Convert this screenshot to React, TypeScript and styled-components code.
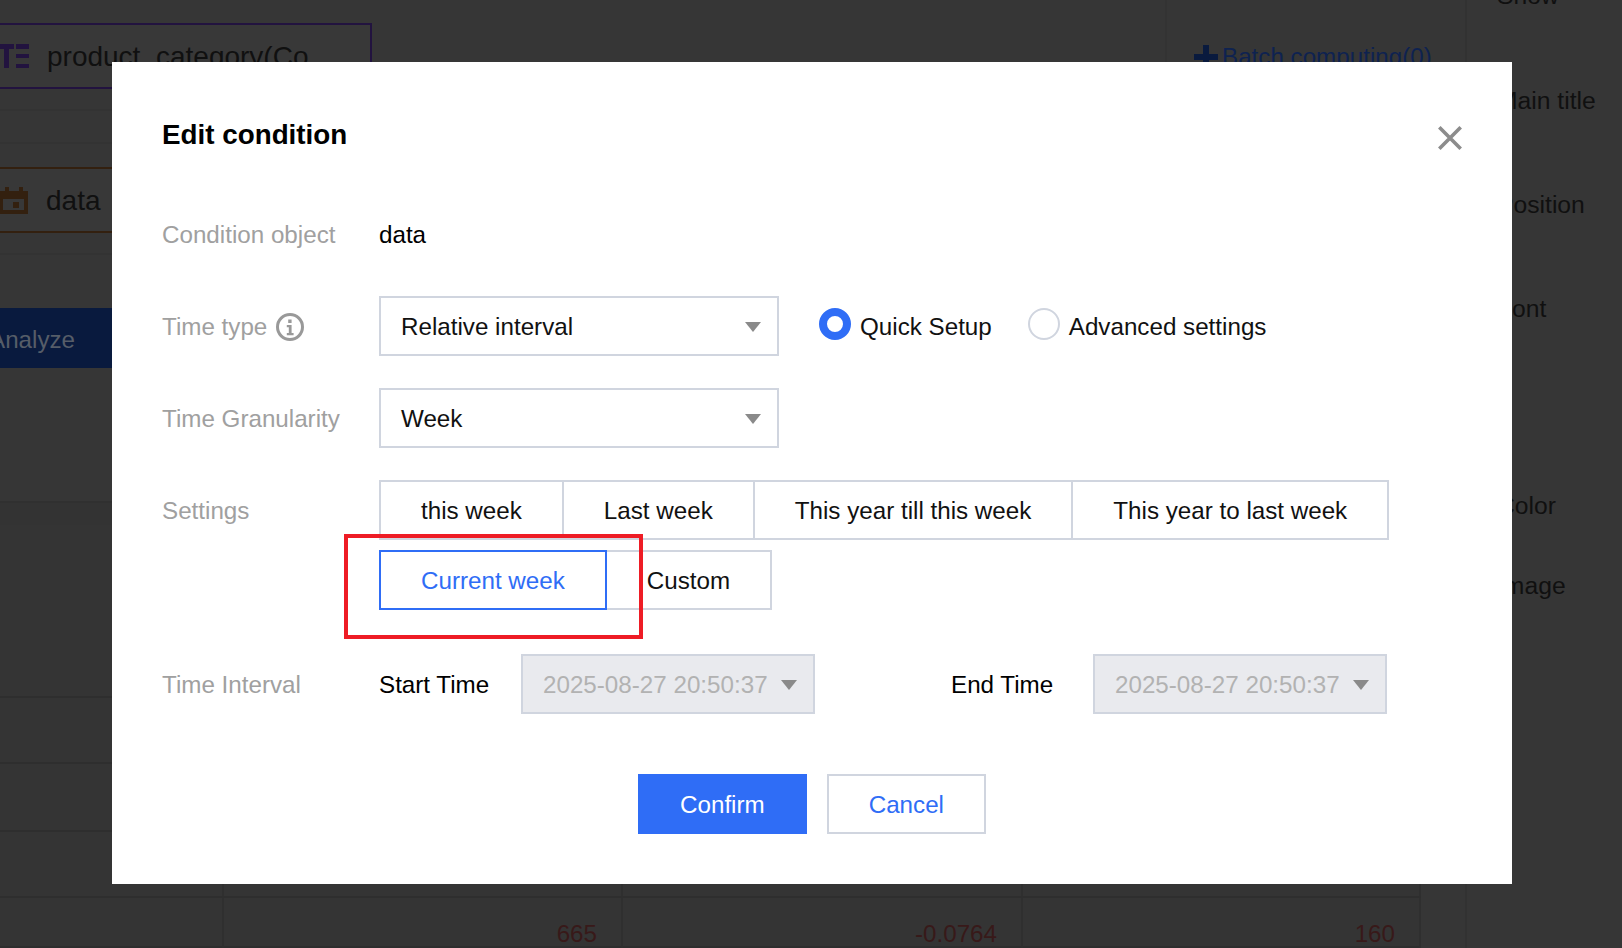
import { createGlobalStyle, styled } from 'styled-components';

const BLUE = '#2f6df6';
const LINE = '#d0d5df';

const GlobalStyle = createGlobalStyle`
  html,
  body {
    width: 1622px;
    height: 948px;
    margin: 0;
    overflow: hidden;
    background: #363636;
    font-family: "Liberation Sans", Arial, sans-serif;
  }

  * {
    box-sizing: border-box;
  }

  svg {
    flex: none;
  }
`;

const timeOptions = ['this week', 'Last week', 'This year till this week', 'This year to last week', 'Current week', 'Custom'];

const sideItems = [
  { text: 'Show', top: 0 },
  { text: 'Main title', top: 71 },
  { text: 'Position', top: 70 },
  { text: 'Font', top: 70 },
  { text: 'Color', top: 163 },
  { text: 'Image', top: 46 },
];

const tableRows = [
  { height: 173, cells: ['', '', '', ''] },
  { height: 66, cells: ['', '', '', ''] },
  { height: 68, cells: ['', '', '', ''] },
  { height: 66, cells: ['', '', '', ''] },
  { height: 50, cells: ['', '665', '-0.0764', '160'] },
];

const TypeIcon = () => (
  <svg width="30" height="24" viewBox="0 0 30 24" fill="#22133f">
    <path d="M0 0h15v5H10v19H5V5H0zM17 0h13v5H17zM17 10h13v4H17zM17 20h13v4H17z" />
  </svg>
);

const DateIcon = () => (
  <svg width="29" height="27" viewBox="0 0 29 27" fill="#33200f">
    <path fillRule="evenodd" d="M6 0h4v4h10V0h4v4h5v23H0V4h6zM4 12v11h21V12zM14 15h6v6h-6z" />
  </svg>
);

const InfoIcon = () => (
  <svg width="28" height="28" viewBox="0 0 28 28" fill="none">
    <circle cx="14" cy="14" r="12.5" stroke="#999" strokeWidth="3" />
    <path fill="#999" d="M12.2 6.5h3.4v3.4h-3.4zM10.8 12h4.8v8h2v2.2h-6.8V20h2v-5.8h-2z" />
  </svg>
);

const CloseIcon = () => (
  <svg width="24" height="24" viewBox="0 0 24 24" stroke="#8c8c8c" strokeWidth="3.6">
    <path d="M1.3 1.3l21.4 21.4M22.7 1.3L1.3 22.7" />
  </svg>
);

const PlusIcon = () => (
  <svg width="24" height="24" viewBox="0 0 24 24" fill="#091a3e">
    <path d="M9 0h6v9h9v6h-9v9H9v-9H0V9h9z" />
  </svg>
);

const App = () => (
  <Page>
    <GlobalStyle />
    <Backdrop>
      <MainArea>
        <FieldZone>
          <FieldColumn>
            <ChipBand>
              <FieldChip $border="#22133f">
                <TypeIcon />
                <ChipText>product_category(Co</ChipText>
              </FieldChip>
            </ChipBand>
            <EmptyBand />
            <ChipBand>
              <FieldChip $border="#33200f">
                <DateIcon />
                <ChipText>data</ChipText>
              </FieldChip>
            </ChipBand>
            <AnalyzeButton>Analyze</AnalyzeButton>
          </FieldColumn>
          <ActionColumn>
            <PlusIcon />
            <BatchLink>Batch computing(0)</BatchLink>
          </ActionColumn>
        </FieldZone>
        <TableStrip />
        {tableRows.map((row, rowIndex) => (
          <TableRow key={rowIndex} $height={row.height}>
            {row.cells.map((cell, cellIndex) => (
              <TableCell key={cellIndex}>{cell}</TableCell>
            ))}
          </TableRow>
        ))}
      </MainArea>
      <SidePanel>
        {sideItems.map((item) => (
          <SideItem key={item.text} $top={item.top}>
            {item.text}
          </SideItem>
        ))}
      </SidePanel>
    </Backdrop>

    <Overlay>
      <Modal>
        <ModalHeader>
          <ModalTitle>Edit condition</ModalTitle>
          <CloseButton aria-label="Close">
            <CloseIcon />
          </CloseButton>
        </ModalHeader>

        <FormRow>
          <FieldLabel>Condition object</FieldLabel>
          <FieldValue>data</FieldValue>
        </FormRow>

        <FormRow>
          <FieldLabel>
            Time type
            <InfoIcon />
          </FieldLabel>
          <SelectBox>
            Relative interval
            <Caret />
          </SelectBox>
          <RadioGroup>
            <RadioItem>
              <RadioMark $checked />
              Quick Setup
            </RadioItem>
            <RadioItem>
              <RadioMark />
              Advanced settings
            </RadioItem>
          </RadioGroup>
        </FormRow>

        <FormRow>
          <FieldLabel>Time Granularity</FieldLabel>
          <SelectBox>
            Week
            <Caret />
          </SelectBox>
        </FormRow>

        <FormRow $gap={44}>
          <FieldLabel>Settings</FieldLabel>
          <SegmentGroup>
            {timeOptions.map((option) => (
              <SegmentButton key={option} $active={option === 'Current week'}>
                {option}
              </SegmentButton>
            ))}
            <Annotation />
          </SegmentGroup>
        </FormRow>

        <FormRow $gap={60}>
          <FieldLabel>Time Interval</FieldLabel>
          <TimeLabel>Start Time</TimeLabel>
          <TimeBox>
            2025-08-27 20:50:37
            <Caret />
          </TimeBox>
          <TimeLabel $offset={136}>End Time</TimeLabel>
          <TimeBox>
            2025-08-27 20:50:37
            <Caret />
          </TimeBox>
        </FormRow>

        <ModalFooter>
          <PrimaryButton>Confirm</PrimaryButton>
          <SecondaryButton>Cancel</SecondaryButton>
        </ModalFooter>
      </Modal>
    </Overlay>
  </Page>
);

export default App;

const Page = styled.div`
  position: relative;
  width: 1622px;
  height: 948px;
  overflow: hidden;
  font-size: 24.2px;
`;

const Backdrop = styled.div`
  display: flex;
  height: 100%;
  background: #363636;
`;

const MainArea = styled.div`
  width: 1467px;
  flex: none;
  border-right: 2px solid #323232;
`;

const FieldZone = styled.div`
  display: flex;
  height: 503px;
  border-bottom: 2px solid #303030;
`;

const FieldColumn = styled.div`
  width: 1167px;
  flex: none;
  border-right: 2px solid #333;
`;

const ChipBand = styled.div`
  height: 111px;
  padding-top: 23px;
  border-bottom: 2px solid #333;

  & + & {
    height: 111px;
    padding-top: 22px;
  }
`;

const EmptyBand = styled.div`
  height: 33px;
  border-bottom: 2px solid #333;
`;

const FieldChip = styled.div<{ $border: string }>`
  display: flex;
  align-items: center;
  gap: 18px;
  width: 392px;
  height: 66px;
  margin-left: -20px;
  padding-left: 17px;
  background: #383838;
  border: 2px solid ${({ $border }) => $border};
  overflow: hidden;
`;

const ChipText = styled.span`
  padding-top: 2px;
  font-size: 28px;
  color: #101010;
  white-space: nowrap;
`;

const AnalyzeButton = styled.div`
  display: flex;
  align-items: center;
  width: 200px;
  height: 60px;
  margin: 53px 0 0 -11px;
  padding-top: 4px;
  background: #091a3e;
  color: #565d68;
`;

const ActionColumn = styled.div`
  display: flex;
  gap: 4px;
  align-items: center;
  flex: 1;
  height: 92px;
  padding: 22px 0 0 27px;
`;

const BatchLink = styled.span`
  color: #0e2250;
  white-space: nowrap;
`;

const TableStrip = styled.div`
  height: 22px;
  background: #333;
`;

const TableRow = styled.div<{ $height: number }>`
  display: grid;
  grid-template-columns: 224px 399px 400px 398px;
  width: 1421px;
  height: ${({ $height }) => $height}px;
  background: #343434;
  border-bottom: 2px solid #2e2e2e;
`;

const TableCell = styled.div`
  padding: 22px 24px 0 0;
  border-right: 2px solid #2f2f2f;
  color: #381919;
  line-height: 28px;
  text-align: right;
`;

const SidePanel = styled.div`
  flex: 1;
  margin-top: -21px;
  padding-left: 30px;
`;

const SideItem = styled.div<{ $top: number }>`
  margin-top: ${({ $top }) => $top}px;
  color: #101010;
  font-size: 24.7px;
  line-height: 34px;
  white-space: nowrap;
`;

const Overlay = styled.div`
  position: absolute;
  inset: 0;
  display: flex;
  align-items: flex-start;
  padding: 62px 0 0 112px;
`;

const Modal = styled.div`
  width: 1400px;
  height: 822px;
  padding: 52px 50px 50px;
  background: #fff;
  color: #111;
`;

const ModalHeader = styled.div`
  display: flex;
  align-items: flex-start;
  justify-content: space-between;
  height: 40px;
  margin-bottom: 50px;
`;

const ModalTitle = styled.h2`
  margin: 0;
  color: #000;
  font-size: 27.8px;
  font-weight: 700;
  line-height: 42px;
`;

const CloseButton = styled.button`
  display: flex;
  margin-top: 12px;
  padding: 0;
  background: none;
  border: 0;
`;

const FormRow = styled.div<{ $gap?: number }>`
  display: flex;
  align-items: flex-start;
  min-height: 60px;
  margin-bottom: ${({ $gap = 32 }) => $gap}px;
`;

const FieldLabel = styled.div`
  display: flex;
  align-items: center;
  gap: 9px;
  width: 217px;
  height: 60px;
  flex: none;
  padding-top: 2px;
  color: #a0a0a0;
`;

const FieldValue = styled.div`
  height: 60px;
  color: #000;
  line-height: 62px;
`;

const SelectBox = styled.div`
  display: flex;
  align-items: center;
  justify-content: space-between;
  width: 400px;
  height: 60px;
  padding: 2px 16px 0 20px;
  background: #fff;
  border: 2px solid ${LINE};
`;

const Caret = styled.span`
  width: 0;
  height: 0;
  flex: none;
  border-top: 10px solid #8a8a8a;
  border-right: 8px solid transparent;
  border-left: 8px solid transparent;
`;

const RadioGroup = styled.div`
  display: flex;
  gap: 36px;
  height: 60px;
  margin-left: 40px;
  padding-top: 2px;
`;

const RadioItem = styled.label`
  display: flex;
  align-items: center;
  gap: 9px;
`;

const RadioMark = styled.span<{ $checked?: boolean }>`
  width: 32px;
  height: 32px;
  margin-top: -6px;
  background: #fff;
  border: ${({ $checked }) => ($checked ? `8px solid ${BLUE}` : `2px solid ${LINE}`)};
  border-radius: 50%;
`;

const SegmentGroup = styled.div`
  position: relative;
  display: flex;
  flex-wrap: wrap;
  gap: 10px 0;
  width: 1040px;
`;

const SegmentButton = styled.button<{ $active?: boolean }>`
  position: relative;
  z-index: ${({ $active }) => ($active ? 1 : 0)};
  height: 60px;
  margin-right: -2px;
  padding: 2px 40px 0;
  background: #fff;
  border: 2px solid ${({ $active }) => ($active ? BLUE : LINE)};
  color: ${({ $active }) => ($active ? BLUE : '#111')};
  font: inherit;
  white-space: nowrap;
`;

const Annotation = styled.div`
  position: absolute;
  top: 54px;
  left: -35px;
  z-index: 2;
  width: 299px;
  height: 105px;
  border: 4px solid #ee1c25;
  pointer-events: none;
`;

const TimeLabel = styled.div<{ $offset?: number }>`
  width: 142px;
  height: 60px;
  flex: none;
  margin-left: ${({ $offset = 0 }) => $offset}px;
  color: #000;
  line-height: 62px;
`;

const TimeBox = styled.div`
  display: flex;
  align-items: center;
  justify-content: space-between;
  width: 294px;
  height: 60px;
  padding: 2px 16px 0 20px;
  background: #e9eaee;
  border: 2px solid ${LINE};
  color: #b2b2b2;
  white-space: nowrap;
`;

const ModalFooter = styled.div`
  display: flex;
  gap: 20px;
  justify-content: center;
`;

const PrimaryButton = styled.button`
  height: 60px;
  padding: 2px 42px 0;
  background: ${BLUE};
  border: 0;
  color: #fff;
  font: inherit;
`;

const SecondaryButton = styled.button`
  height: 60px;
  padding: 2px 40px 0;
  background: #fff;
  border: 2px solid ${LINE};
  color: ${BLUE};
  font: inherit;
`;
